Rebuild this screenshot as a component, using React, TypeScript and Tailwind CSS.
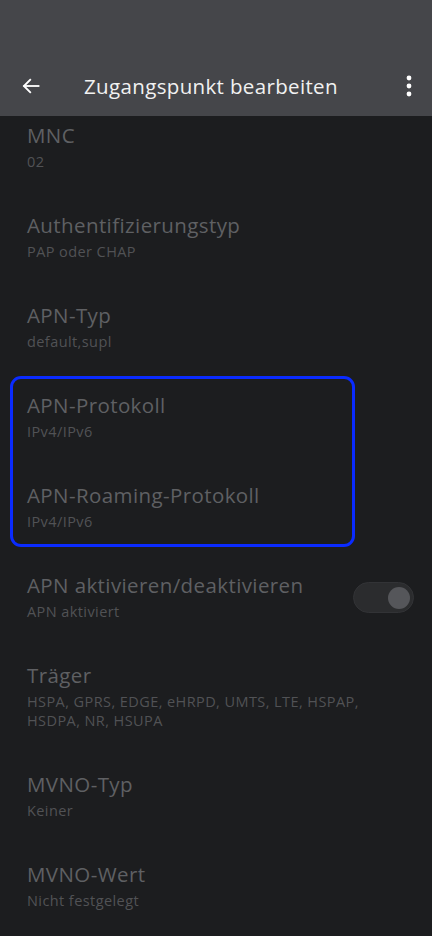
import React from "react";

function Item({ title, sub }: { title: string; sub: React.ReactNode }) {
  return (
    <div className="px-[27px] pb-[40px]">
      <div className="text-[20.5px] leading-[28px] tracking-[0.4px] text-[#5f6063]">{title}</div>
      <div className="mt-[3px] text-[14.5px] leading-[19px] tracking-[0.42px] text-[#515255]">{sub}</div>
    </div>
  );
}

export default function App() {
  return (
    <div
      className="w-[432px] h-[936px] overflow-hidden bg-[#1c1d1f]"
      style={{ fontFamily: "'Open Sans', Roboto, sans-serif" }}
    >
      <div className="h-[116px] bg-[#45464a] flex flex-col justify-end">
        <div className="h-[60px] flex items-center">
          <div className="w-[84px] flex items-center pl-[21px]">
            <svg width="20" height="20" viewBox="0 0 24 24" fill="none" stroke="#ffffff" strokeWidth="2.2" strokeLinecap="square">
              <path d="M21 12H4" />
              <path d="M11 4.5L3.5 12L11 19.5" />
            </svg>
          </div>
          <div className="flex-1 text-[20.5px] tracking-[0.35px] text-[#f1f1f1]">Zugangspunkt bearbeiten</div>
          <div className="w-[50px] flex justify-center pl-[3px]">
            <svg width="6" height="22" viewBox="0 0 6 22" fill="#ffffff">
              <circle cx="3" cy="3" r="2.4" />
              <circle cx="3" cy="11" r="2.4" />
              <circle cx="3" cy="19" r="2.4" />
            </svg>
          </div>
        </div>
      </div>
      <div className="pt-[5px]">
        <Item title="MNC" sub="02" />
        <Item title="Authentifizierungstyp" sub="PAP oder CHAP" />
        <Item title="APN-Typ" sub="default,supl" />
        <div className="relative">
          <div className="absolute left-[10px] top-[-15px] w-[345px] h-[171px] border-[3px] border-[#0a2bff] rounded-[11px] pointer-events-none" />
          <Item title="APN-Protokoll" sub="IPv4/IPv6" />
          <Item title="APN-Roaming-Protokoll" sub="IPv4/IPv6" />
        </div>
        <div className="flex items-start pr-[18px]">
          <div className="flex-1">
            <Item title="APN aktivieren/deaktivieren" sub="APN aktiviert" />
          </div>
          <div className="mt-[11px] w-[61px] h-[31px] rounded-full bg-[#2b2c2e] border border-[#323336] flex items-center justify-end pr-[3px]">
            <div className="w-[22px] h-[22px] rounded-full bg-[#55565a]" />
          </div>
        </div>
        <Item
          title="Träger"
          sub={
            <>
              HSPA, GPRS, EDGE, eHRPD, UMTS, LTE, HSPAP,
              <br />
              HSDPA, NR, HSUPA
            </>
          }
        />
        <Item title="MVNO-Typ" sub="Keiner" />
        <Item title="MVNO-Wert" sub="Nicht festgelegt" />
      </div>
    </div>
  );
}
